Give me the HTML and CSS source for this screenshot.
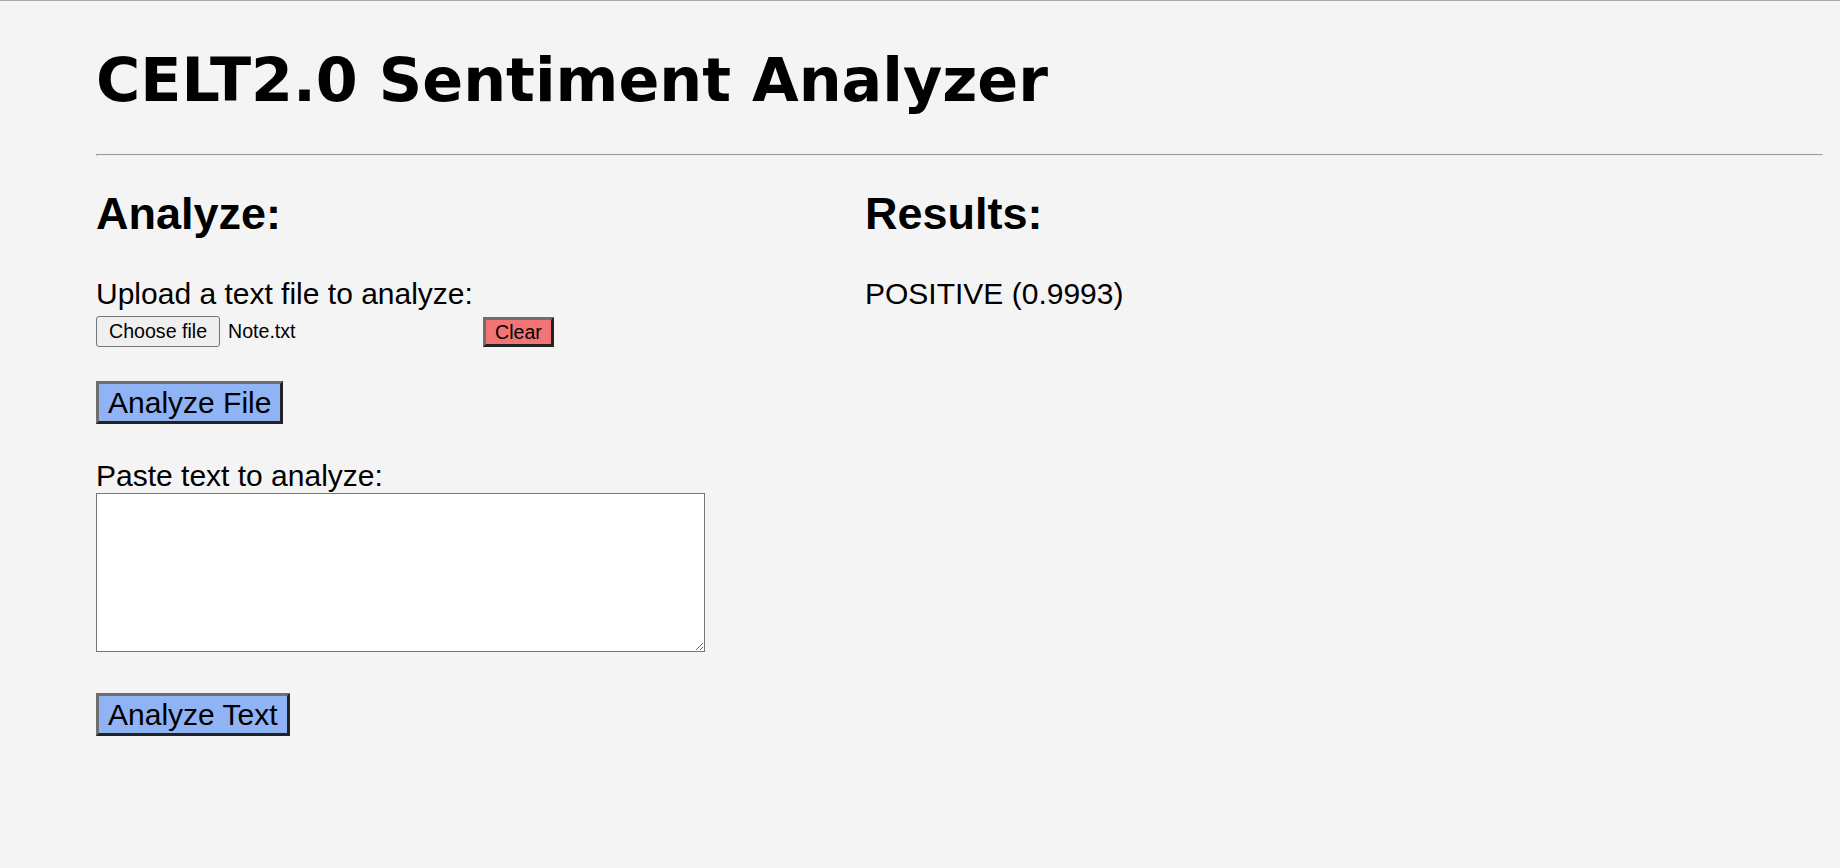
FILE: index.html
```html
<!DOCTYPE html>
<html lang="en">
<head>
<meta charset="utf-8">
<title>CELT2.0 Sentiment Analyzer</title>
<link rel="stylesheet" href="styles.css">
</head>
<body>
<div class="page">
  <h1 class="title">CELT2.0 Sentiment Analyzer</h1>
  <hr class="rule">
  <div class="columns">
    <section class="col-analyze">
      <h2 class="heading">Analyze:</h2>
      <label class="label upload-label" for="file">Upload a text file to analyze:</label>
      <div class="file-row">
        <div class="file-input" id="file">
          <button class="choose" type="button">Choose file</button>
          <span class="filename">Note.txt</span>
        </div>
        <button class="btn btn-clear" type="button">Clear</button>
      </div>
      <button class="btn btn-analyze btn-file" type="button">Analyze File</button>
      <label class="label paste-label" for="text">Paste text to analyze:</label>
      <textarea class="text-area" id="text"></textarea>
      <button class="btn btn-analyze btn-text" type="button">Analyze Text</button>
    </section>
    <section class="col-results">
      <h2 class="heading">Results:</h2>
      <p class="label result">POSITIVE (0.9993)</p>
    </section>
  </div>
</div>
</body>
</html>
```

FILE: styles.css
```css
html, body {
  margin: 0;
  padding: 0;
}

body {
  background: #f4f4f4;
  border-top: 1px solid #a9a9a9;
  color: #000;
  font-family: "Liberation Sans", Arial, sans-serif;
  min-height: 867px;
}

.page {
  padding: 0 17px 0 96px;
}

.title {
  font-family: "DejaVu Sans", Verdana, sans-serif;
  font-weight: bold;
  font-size: 60.3px;
  line-height: 70px;
  margin: 44px 0 0 0;
}

.rule {
  margin: 39px 0 0 0;
  border-style: inset;
  border-width: 1px;
  color: gray;
}

.columns {
  display: grid;
  grid-template-columns: 769px 1fr;
}

.col-analyze,
.col-results {
  display: flex;
  flex-direction: column;
  align-items: flex-start;
}

.heading {
  font-size: 45px;
  line-height: 52px;
  font-weight: bold;
  margin: 32px 0 0 0;
}

.label {
  display: block;
  font-size: 30px;
  line-height: 34px;
  margin: 0;
}

.upload-label,
.result {
  margin-top: 37px;
}

.file-row {
  display: flex;
  align-items: center;
  gap: 7px;
  margin-top: 5px;
}

.file-input {
  width: 380px;
  display: flex;
  align-items: center;
  gap: 8px;
  font-size: 19.6px;
}

.choose {
  font-family: "Liberation Sans", Arial, sans-serif;
  font-size: 19.6px;
  line-height: 23px;
  padding: 3px 12px;
  background: #efefef;
  border: 1px solid #767676;
  border-radius: 3px;
  color: #000;
  margin: 0;
}

.filename {
  line-height: 23px;
}

.btn {
  font-family: "Liberation Sans", Arial, sans-serif;
  color: #000;
  border: 3px solid;
  border-color: #6e6e6e #222 #222 #6e6e6e;
  border-radius: 0;
  margin: 0;
}

.btn-clear {
  background: #f27474;
  font-size: 19.6px;
  line-height: 22px;
  padding: 1px 9px;
}

.btn-analyze {
  background: #8fb3f4;
  font-size: 30px;
  line-height: 33px;
  padding: 2px 9px;
}

.btn-file {
  margin-top: 34px;
}

.paste-label {
  margin-top: 35px;
}

.text-area {
  display: block;
  box-sizing: border-box;
  width: 609px;
  height: 159px;
  margin: 0;
  padding: 2px;
  background: #fff;
  border: 1px solid #767676;
  border-radius: 0;
  font-family: "Liberation Mono", monospace;
  font-size: 20px;
}

.btn-text {
  margin-top: 41px;
}
```
